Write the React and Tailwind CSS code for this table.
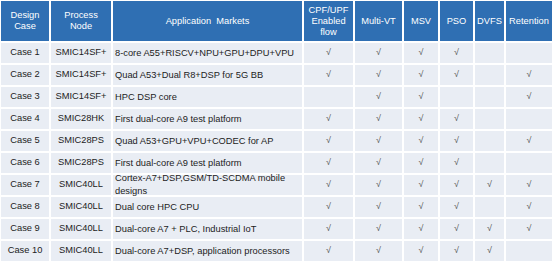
import React from 'react';

const columns = ['48px', '60px', '189px', '49px', '47px', '34px', '33px', '29px', '46px'];

const headers = [
  ['Design', 'Case'],
  ['Process', 'Node'],
  ['Application  Markets'],
  ['CPF/UPF', 'Enabled', 'flow'],
  ['Multi-VT'],
  ['MSV'],
  ['PSO'],
  ['DVFS'],
  ['Retention'],
];

// flags: CPF, Multi-VT, MSV, PSO, DVFS, Retention
const rows = [
  ['Case 1', 'SMIC14SF+', '8-core A55+RISCV+NPU+GPU+DPU+VPU', [1, 1, 1, 1, 0, 0]],
  ['Case 2', 'SMIC14SF+', 'Quad A53+Dual R8+DSP for 5G BB', [1, 1, 1, 1, 0, 1]],
  ['Case 3', 'SMIC14SF+', 'HPC DSP core', [0, 1, 1, 0, 0, 1]],
  ['Case 4', 'SMIC28HK', 'First dual-core A9 test platform', [1, 1, 1, 1, 0, 0]],
  ['Case 5', 'SMIC28PS', 'Quad A53+GPU+VPU+CODEC for AP', [1, 1, 1, 1, 0, 1]],
  ['Case 6', 'SMIC28PS', 'First dual-core A9 test platform', [1, 1, 1, 1, 0, 0]],
  ['Case 7', 'SMIC40LL', ['Cortex-A7+DSP,GSM/TD-SCDMA mobile', 'designs'], [1, 1, 1, 1, 1, 1]],
  ['Case 8', 'SMIC40LL', 'Dual core HPC CPU', [1, 1, 1, 1, 0, 1]],
  ['Case 9', 'SMIC40LL', 'Dual-core A7 + PLC, Industrial IoT', [1, 1, 1, 1, 1, 1]],
  ['Case 10', 'SMIC40LL', 'Dual-core A7+DSP, application processors', [1, 1, 1, 1, 1, 0]],
];

const App = () => {
  return (
    <div className="w-[554px] h-[264px] bg-white pt-px pl-px font-['Liberation_Sans',Arial,sans-serif] text-[9.3px]">
      <div
        className="grid gap-[2px] w-fit"
        style={{ gridTemplateColumns: columns.join(' ') }}
      >
        {headers.map((lines, i) => (
          <div
            key={i}
            className="h-[40px] bg-[#2f6fb3] text-white flex flex-col items-center justify-center text-center leading-[11px] whitespace-pre"
          >
            {lines.map((l, j) => (
              <span key={j}>{l}</span>
            ))}
          </div>
        ))}

        {rows.map(([caseName, node, app, flags]) => (
          <React.Fragment key={caseName}>
            <div className="h-[20px] bg-[#e9edf4] text-[#1c1c1c] flex items-center justify-center">
              {caseName}
            </div>
            <div className="h-[20px] bg-[#e9edf4] text-[#1c1c1c] flex items-center justify-center">
              {node}
            </div>
            <div className="h-[20px] bg-[#e9edf4] text-[#1c1c1c] flex flex-col justify-center pl-[2px] leading-[13px] whitespace-nowrap">
              {Array.isArray(app) ? app.map((l, j) => <span key={j}>{l}</span>) : <span>{app}</span>}
            </div>
            {flags.map((f, k) => (
              <div
                key={k}
                className="h-[20px] bg-[#e9edf4] text-[#555] flex items-center justify-center text-[9px]"
              >
                {f ? '√' : ''}
              </div>
            ))}
          </React.Fragment>
        ))}
      </div>
    </div>
  );
};

export default App;
